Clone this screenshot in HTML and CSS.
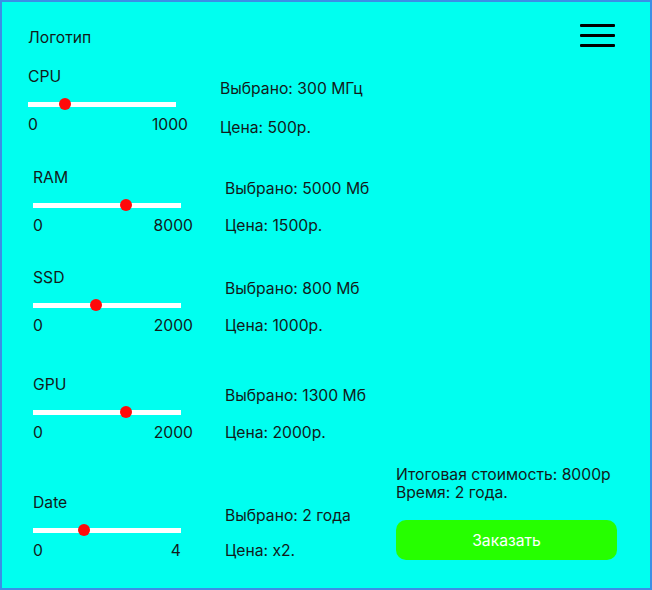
FILE: index.html
```html
<!DOCTYPE html>
<html lang="ru">
<head>
<meta charset="utf-8">
<title>Конфигуратор</title>
<link rel="stylesheet" href="styles.css">
</head>
<body>
<div class="frame">
  <header class="header">
    <div class="logo">Логотип</div>
    <div class="burger"><span></span><span></span><span></span></div>
  </header>

  <section class="group group--first">
    <div class="control">
      <div class="label">CPU</div>
      <div class="slider"><div class="track"></div><div class="thumb" style="left: calc(25% - 6px)"></div></div>
      <div class="range"><span>0</span><span>1000</span></div>
    </div>
    <div class="info info--cpu">
      <div>Выбрано: 300 МГц</div>
      <div>Цена: 500р.</div>
    </div>
  </section>

  <section class="group group--ram">
    <div class="control">
      <div class="label">RAM</div>
      <div class="slider"><div class="track"></div><div class="thumb" style="left: calc(63% - 6px)"></div></div>
      <div class="range"><span>0</span><span>8000</span></div>
    </div>
    <div class="info">
      <div>Выбрано: 5000 Мб</div>
      <div>Цена: 1500р.</div>
    </div>
  </section>

  <section class="group group--ssd">
    <div class="control">
      <div class="label">SSD</div>
      <div class="slider"><div class="track"></div><div class="thumb" style="left: calc(42.5% - 6px)"></div></div>
      <div class="range"><span>0</span><span>2000</span></div>
    </div>
    <div class="info">
      <div>Выбрано: 800 Мб</div>
      <div>Цена: 1000р.</div>
    </div>
  </section>

  <section class="group group--gpu">
    <div class="control">
      <div class="label">GPU</div>
      <div class="slider"><div class="track"></div><div class="thumb" style="left: calc(63% - 6px)"></div></div>
      <div class="range"><span>0</span><span>2000</span></div>
    </div>
    <div class="info">
      <div>Выбрано: 1300 Мб</div>
      <div>Цена: 2000р.</div>
    </div>
  </section>

  <div class="last-row">
    <section class="group group--date">
      <div class="control">
        <div class="label">Date</div>
        <div class="slider"><div class="track"></div><div class="thumb" style="left: calc(34.5% - 6px)"></div></div>
        <div class="range range--short"><span>0</span><span>4</span></div>
      </div>
      <div class="info info--date">
        <div>Выбрано: 2 года</div>
        <div>Цена: x2.</div>
      </div>
    </section>
    <div class="summary">
      <div class="totals">
        <div>Итоговая стоимость: 8000р</div>
        <div>Время: 2 года.</div>
      </div>
      <button class="order">Заказать</button>
    </div>
  </div>
</div>
</body>
</html>
```

FILE: styles.css
```css
* { box-sizing: border-box; }

html, body {
  margin: 0;
  padding: 0;
  background: #ffffff;
}

body {
  font-family: Inter, "Noto Sans", sans-serif;
  font-size: 15.7px;
  line-height: 18px;
  color: #121a1a;
}

.frame {
  width: 652px;
  height: 590px;
  border: 2px solid #3b8fe6;
  background: #00fff0;
  padding: 22px 33px 0 26px;
  display: flex;
  flex-direction: column;
}

.header {
  display: flex;
  justify-content: space-between;
  align-items: flex-start;
}

.logo {
  margin-top: 5px;
}

.burger {
  width: 35px;
  height: 23px;
  margin-right: 2px;
  display: flex;
  flex-direction: column;
  justify-content: space-between;
}

.burger span {
  display: block;
  height: 3px;
  background: #000;
  border-radius: 1px;
}

.group {
  display: flex;
  gap: 32px;
  margin-left: 5px;
}

.group--first { margin-top: 21px; margin-left: 0; }
.group--ram { margin-top: 32px; }
.group--ssd { margin-top: 34px; }
.group--gpu { margin-top: 41px; }

.control {
  width: 160px;
  display: flex;
  flex-direction: column;
}

.slider {
  position: relative;
  width: 148px;
  height: 12px;
  margin-top: 12px;
  display: flex;
  align-items: center;
}

.track {
  width: 100%;
  height: 5px;
  background: #ffffff;
}

.thumb {
  position: absolute;
  top: 0;
  width: 12px;
  height: 12px;
  border-radius: 50%;
  background: #ff0a0a;
}

.range {
  margin-top: 6px;
  display: flex;
  justify-content: space-between;
  width: 160px;
}

.range--short {
  width: 148px;
}

.info {
  padding-top: 11px;
  display: flex;
  flex-direction: column;
  gap: 19px;
}

.info--cpu {
  padding-top: 12px;
  gap: 21px;
}

.info--date {
  padding-top: 13px;
  gap: 17px;
}

.last-row {
  margin-top: 24px;
  display: flex;
  align-items: flex-end;
}

.summary {
  margin-left: auto;
  width: 221px;
  display: flex;
  flex-direction: column;
}

.order {
  margin-top: 18px;
  height: 40px;
  width: 100%;
  border: none;
  border-radius: 10px;
  background: #26ff00;
  color: #ffffff;
  font-family: Inter, "Noto Sans", sans-serif;
  font-size: 15.7px;
  line-height: 18px;
  padding: 2px 0 0;
}
```
